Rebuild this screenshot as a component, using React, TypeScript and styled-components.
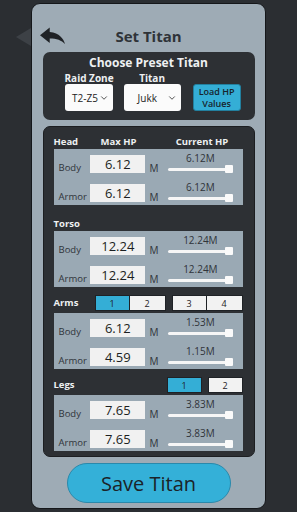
import styled, { createGlobalStyle } from 'styled-components';
import { ChevronDown } from 'lucide-react';

const GlobalStyle = createGlobalStyle`
  html, body {
    margin: 0;
    padding: 0;
    background: #2b2e32;
    font-family: "Open Sans", "Noto Sans", sans-serif;
  }
  * { box-sizing: border-box; }
`;

type Part = { label: string; max: string; current: string };

const sections: { title: string; buttons?: string[][]; active?: number; parts: Part[] }[] = [
    {
        title: 'Head',
        parts: [
            { label: 'Body', max: '6.12', current: '6.12M' },
            { label: 'Armor', max: '6.12', current: '6.12M' },
        ],
    },
    {
        title: 'Torso',
        parts: [
            { label: 'Body', max: '12.24', current: '12.24M' },
            { label: 'Armor', max: '12.24', current: '12.24M' },
        ],
    },
    {
        title: 'Arms',
        buttons: [['1', '2'], ['3', '4']],
        active: 0,
        parts: [
            { label: 'Body', max: '6.12', current: '1.53M' },
            { label: 'Armor', max: '4.59', current: '1.15M' },
        ],
    },
    {
        title: 'Legs',
        buttons: [['1'], ['2']],
        active: 0,
        parts: [
            { label: 'Body', max: '7.65', current: '3.83M' },
            { label: 'Armor', max: '7.65', current: '3.83M' },
        ],
    },
];

// curved "reply" style back arrow
function BackArrow() {
    return (
        <svg width="25" height="17" viewBox="3 4.5 18 15.5" preserveAspectRatio="none">
            <path d="M10 9V5l-7 7 7 7v-4.1c5 0 8.5 1.6 11 5.1-1-5-4-10-11-11z" fill="currentColor" />
        </svg>
    );
}

export default function App() {
    return (
        <>
            <GlobalStyle />
            <Page>
                <SideTab />
                <Panel>
                    <Header>
                        <BackButton>
                            <BackArrow />
                        </BackButton>
                        <Title>Set Titan</Title>
                    </Header>

                    <PresetBox>
                        <PresetTitle>Choose Preset Titan</PresetTitle>
                        <PresetRow>
                            <PresetField>
                                <FieldLabel>Raid Zone</FieldLabel>
                                <Select $width={48}>
                                    <span>T2-Z5</span>
                                    <ChevronDown size={10} strokeWidth={2} />
                                </Select>
                            </PresetField>
                            <PresetField>
                                <FieldLabel>Titan</FieldLabel>
                                <Select $width={57}>
                                    <span>Jukk</span>
                                    <ChevronDown size={10} strokeWidth={2} />
                                </Select>
                            </PresetField>
                            <LoadButton>
                                <span>Load HP</span>
                                <span>Values</span>
                            </LoadButton>
                        </PresetRow>
                    </PresetBox>

                    <PartsBox>
                        {sections.map((section, si) => (
                            <Section key={section.title}>
                                <SectionHeader $withButtons={!!section.buttons}>
                                    <SectionTitle>{section.title}</SectionTitle>
                                    {si === 0 && (
                                        <>
                                            <ColumnTitle $width={56}>Max HP</ColumnTitle>
                                            <ColumnTitle $width={65} $offset={23}>
                                                Current HP
                                            </ColumnTitle>
                                        </>
                                    )}
                                    {section.buttons && (
                                        <ButtonGroups $split={section.buttons[0].length > 1}>
                                            {section.buttons.map((group, gi) => (
                                                <ButtonGroup key={gi}>
                                                    {group.map((b) => (
                                                        <ToggleButton
                                                            key={b}
                                                            $active={gi === 0 && b === group[section.active ?? 0]}
                                                        >
                                                            {b}
                                                        </ToggleButton>
                                                    ))}
                                                </ButtonGroup>
                                            ))}
                                        </ButtonGroups>
                                    )}
                                </SectionHeader>
                                <PartBox>
                                    {section.parts.map((p) => (
                                        <PartRow key={p.label}>
                                            <PartLabel>{p.label}</PartLabel>
                                            <HpInput>{p.max}</HpInput>
                                            <Unit>M</Unit>
                                            <SliderCol>
                                                <SliderValue>{p.current}</SliderValue>
                                                <Track>
                                                    <Handle />
                                                </Track>
                                            </SliderCol>
                                        </PartRow>
                                    ))}
                                </PartBox>
                            </Section>
                        ))}
                    </PartsBox>

                    <SaveButton>Save Titan</SaveButton>
                </Panel>
            </Page>
        </>
    );
}

const Page = styled.div`
  display: flex;
  align-items: flex-start;
  padding: 3px 0 0 16px;
  height: 512px;
`;

const SideTab = styled.div`
  width: 0;
  height: 0;
  margin-top: 25px;
  border-top: 9px solid transparent;
  border-bottom: 9px solid transparent;
  border-right: 15px solid #3d4146;
`;

const Panel = styled.div`
  width: 235px;
  height: 506px;
  background: #9eabb5;
  border: 1px solid #15171a;
  border-radius: 9px;
  display: flex;
  flex-direction: column;
  align-items: center;
`;

const Header = styled.div`
  position: relative;
  width: 100%;
  height: 24px;
  margin-top: 20px;
  display: flex;
  align-items: center;
  justify-content: center;
`;

const BackButton = styled.div`
  position: absolute;
  left: 8px;
  top: 3px;
  color: #1f2226;
  display: flex;
`;

const Title = styled.h1`
  margin: 0;
  font-size: 15px;
  line-height: 20px;
  font-weight: 700;
  color: #2f3338;
`;

const PresetBox = styled.div`
  width: 212px;
  height: 68px;
  margin-top: 4px;
  background: #2d3034;
  border-radius: 7px;
  padding: 4px 0 0;
  display: flex;
  flex-direction: column;
  align-items: center;
`;

const PresetTitle = styled.div`
  font-size: 12px;
  line-height: 14px;
  font-weight: 700;
  color: #eef0f2;
`;

const PresetRow = styled.div`
  align-self: stretch;
  margin-top: 2px;
  padding-left: 22px;
  display: flex;
  align-items: flex-end;
  gap: 10px;
`;

const PresetField = styled.div`
  display: flex;
  flex-direction: column;
  align-items: center;
`;

const FieldLabel = styled.div`
  font-size: 10px;
  line-height: 12px;
  font-weight: 700;
  color: #eef0f2;
`;

const Select = styled.div<{ $width: number }>`
  width: ${({ $width }) => $width}px;
  height: 27px;
  background: #fbfbfb;
  border-radius: 3px;
  display: flex;
  align-items: center;
  justify-content: space-between;
  padding: 0 4px 0 ${({ $width }) => ($width > 50 ? 14 : 7)}px;
  font-size: 10px;
  color: #222;

  svg {
    color: #333;
  }
`;

const LoadButton = styled.div`
  width: 48px;
  height: 27px;
  margin-left: 2px;
  background: #34aed6;
  border: 1px solid #22809f;
  border-radius: 3px;
  display: flex;
  flex-direction: column;
  align-items: center;
  justify-content: center;
  text-align: center;
  font-size: 9px;
  font-weight: 600;
  color: #17232b;
  white-space: nowrap;

  span {
    display: block;
    line-height: 12px;
    height: 12px;
  }
`;

const PartsBox = styled.div`
  width: 212px;
  margin-top: 6px;
  background: #2d3034;
  border: 1px solid #1c1e21;
  border-radius: 7px;
  padding: 4px 11px 5px 10px;
  display: flex;
  flex-direction: column;
  gap: 8px;
`;

const Section = styled.div`
  display: flex;
  flex-direction: column;
`;

const SectionHeader = styled.div<{ $withButtons: boolean }>`
  height: 18px;
  display: flex;
  align-items: ${({ $withButtons }) => ($withButtons ? 'flex-start' : 'flex-end')};
`;

const SectionTitle = styled.div`
  width: 43px;
  font-size: 9.5px;
  line-height: 14px;
  font-weight: 700;
  color: #eef0f2;
  padding-top: 1px;
`;

const ColumnTitle = styled.div<{ $width: number; $offset?: number }>`
  width: ${({ $width }) => $width}px;
  margin-left: ${({ $offset }) => ($offset ?? 0) - ($offset ? 0 : 6)}px;
  text-align: center;
  font-size: 9.5px;
  line-height: 14px;
  font-weight: 700;
  color: #eef0f2;
`;

const ButtonGroups = styled.div<{ $split: boolean }>`
  flex: 1;
  display: flex;
  justify-content: ${({ $split }) => ($split ? 'space-between' : 'flex-end')};
  gap: 6px;
`;

const ButtonGroup = styled.div`
  display: flex;
`;

const ToggleButton = styled.div<{ $active: boolean }>`
  width: 35px;
  height: 16px;
  background: ${({ $active }) => ($active ? '#34aed6' : '#f2f2f2')};
  border: 1px solid #1f2226;
  display: flex;
  align-items: center;
  justify-content: center;
  font-size: 9px;
  color: #1f2226;

  & + & {
    border-left: none;
    width: 36px;
  }
`;

const PartBox = styled.div`
  background: #9aa9b4;
  padding: 0 10px 3px 5px;
  display: flex;
  flex-direction: column;
  gap: 5px;
`;

const PartRow = styled.div`
  height: 24px;
  display: flex;
  align-items: flex-end;
`;

const PartLabel = styled.div`
  width: 32px;
  font-size: 9.5px;
  line-height: 14px;
  color: #30343a;
  margin-bottom: -2px;
  white-space: nowrap;
`;

const HpInput = styled.div`
  width: 56px;
  height: 18px;
  background: #f1f1f1;
  display: flex;
  align-items: center;
  justify-content: center;
  font-size: 13px;
  color: #1c1f22;
`;

const Unit = styled.div`
  width: 19px;
  margin-left: 4px;
  font-size: 10px;
  line-height: 14px;
  color: #30343a;
  margin-bottom: -2px;
`;

const SliderCol = styled.div`
  width: 65px;
  display: flex;
  flex-direction: column;
  align-items: center;
  margin-bottom: -2px;
`;

const SliderValue = styled.div`
  font-size: 10px;
  line-height: 12px;
  color: #30343a;
`;

const Track = styled.div`
  position: relative;
  width: 100%;
  height: 3px;
  margin: 4px 0 4px;
  background: #f6f6f6;
  border-radius: 2px;
`;

const Handle = styled.div`
  position: absolute;
  right: 0;
  top: -3px;
  width: 8px;
  height: 8px;
  background: #fafafa;
  border-radius: 1px;
`;

const SaveButton = styled.div`
  width: 164px;
  height: 40px;
  margin-top: 6px;
  background: #34b0d8;
  border: 1px solid #2a89ab;
  border-radius: 20px;
  display: flex;
  align-items: center;
  justify-content: center;
  font-size: 20px;
  color: #1b2328;
`;
